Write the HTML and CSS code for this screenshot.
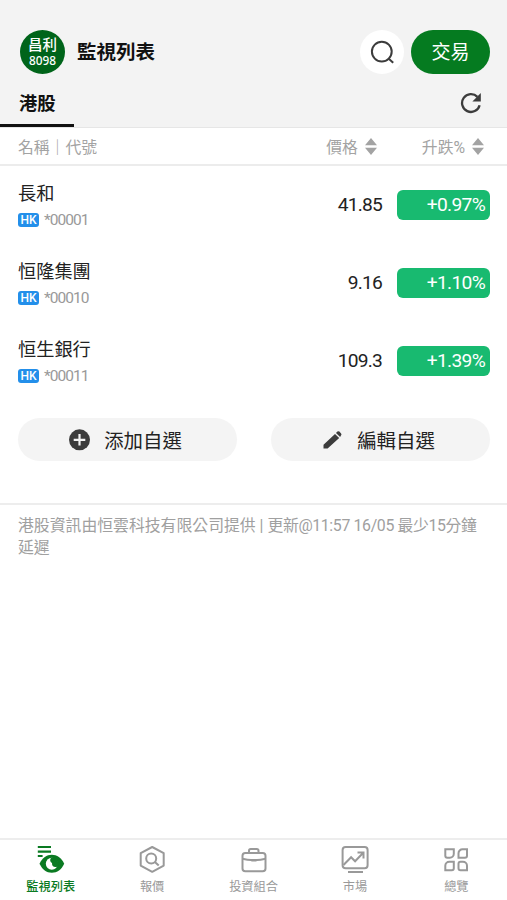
FILE: index.html
```html
<!DOCTYPE html>
<html lang="zh-Hant">
<head>
<meta charset="utf-8">
<meta name="viewport" content="width=device-width, initial-scale=1">
<title>監視列表</title>
<link rel="stylesheet" href="styles.css">
</head>
<body>
<div class="app">
  <header class="header">
    <div class="topbar">
      <div class="logo"><span class="logo-name">昌利</span><span class="logo-code">8098</span></div>
      <h1 class="title">監視列表</h1>
      <button class="search" aria-label="搜尋">
        <svg width="26" height="26" viewBox="0 0 26 26" fill="none" stroke="#3c3c3c" stroke-width="2"><circle cx="12.8" cy="12.6" r="9.9"/><path d="M19.2 19.2 24.2 23.8"/></svg>
      </button>
      <button class="trade">交易</button>
    </div>
    <div class="tabs">
      <div class="tab">港股</div>
      <svg class="refresh" width="22" height="22" viewBox="0 0 22 22"><path d="M19.6 13.2A8.9 8.9 0 1 1 17.4 4.9" fill="none" stroke="#3c3c3c" stroke-width="2.3"/><path d="M20.8 1v8.6h-8.4z" fill="#3c3c3c"/></svg>
    </div>
  </header>

  <div class="columns">
    <span class="col-name">名稱｜代號</span>
    <span class="col-price">價格<svg class="sort" width="12" height="17" viewBox="0 0 12 17"><path d="M6 0l6 7.2H0zM6 17l6-7.2H0z"/></svg></span>
    <span class="col-change">升跌%<svg class="sort" width="12" height="17" viewBox="0 0 12 17"><path d="M6 0l6 7.2H0zM6 17l6-7.2H0z"/></svg></span>
  </div>

  <main>
    <div class="row">
      <div class="stock"><div class="name">長和</div><div class="code"><span class="tag">HK</span>*00001</div></div>
      <div class="price">41.85</div><div class="change">+0.97%</div>
    </div>
    <div class="row">
      <div class="stock"><div class="name">恒隆集團</div><div class="code"><span class="tag">HK</span>*00010</div></div>
      <div class="price">9.16</div><div class="change">+1.10%</div>
    </div>
    <div class="row">
      <div class="stock"><div class="name">恒生銀行</div><div class="code"><span class="tag">HK</span>*00011</div></div>
      <div class="price">109.3</div><div class="change">+1.39%</div>
    </div>
    <div class="actions">
      <button class="action"><svg width="22" height="22" viewBox="0 0 22 22"><circle cx="11.5" cy="10.8" r="10.5" fill="#3c3c3c"/><path d="M11.5 5v11.6M5.7 10.8h11.6" stroke="#f4f4f4" stroke-width="2.2"/></svg>添加自選</button>
      <button class="action"><svg width="22" height="22" viewBox="0 0 22 22" fill="#3c3c3c"><path d="M2.5 19.6v-3.8L14 4.900l4.200 4.200L6.600 19.600zM15 4l1.400-1.400q1-.8 2 0l1.700 1.800q.8 1 0 1.900L19.100 8z"/></svg>編輯自選</button>
    </div>
    <p class="notice">港股資訊由恒雲科技有限公司提供 | <span class="stamp">更新@11:57 16/05 最少15分鐘</span><br>延遲</p>
  </main>

  <nav class="nav">
    <a class="item active">
      <svg width="28" height="28" viewBox="0 0 28 28"><path d="M.8 2H14M.8 6.700H14M.8 11h4.800" stroke="#0a7a22" stroke-width="2.200"/><path d="M2.500 18.700C5.500 12.600 9.600 9.700 14.800 9.700S24.300 12.600 27.200 18.700c-2.700 6-7 9-12.400 9S5.500 24.700 2.500 18.700z" fill="#0a7a22"/><circle cx="14.800" cy="18.700" r="6" fill="#fff"/><path d="M14.500 12.500a3.300 3.300 0 0 0 .5 5.600q-.2 4.300 4.200 3.900l1.800-.6q1.200-6.600-3-8.700z" fill="#0a7a22"/></svg>
      <span>監視列表</span>
    </a>
    <a class="item">
      <svg width="28" height="28" viewBox="0 0 28 28" fill="none" stroke="#999" stroke-width="2" stroke-linejoin="round"><path d="M14.200 2 25.700 8.200v12.400L14.200 26.800 2.700 20.600V8.200z"/><circle cx="13.200" cy="13.500" r="5"/><path d="m16.900 17 3.800 3.600"/></svg>
      <span>報價</span>
    </a>
    <a class="item">
      <svg width="28" height="28" viewBox="0 0 28 28" fill="none" stroke="#999" stroke-width="2"><rect x="2.500" y="8" width="23" height="18.200" rx="2.800"/><path d="M9 8V5.700Q9 4.100 10.700 4.100h6.100q1.700 0 1.700 1.600V8M2.500 13.700q5.500 1.200 8.500 1.200h6q3 0 8.500-1.200M11.300 15.600h5.200"/></svg>
      <span>投資組合</span>
    </a>
    <a class="item">
      <svg width="28" height="28" viewBox="0 0 28 28" fill="none" stroke="#999" stroke-width="2"><rect x="1.600" y="2" width="25" height="21.300" rx="3"/><path d="m2.500 20 7.600-7.800 4 4L22 8M16.500 7.500h6v6M7 26.900h15"/></svg>
      <span>市場</span>
    </a>
    <a class="item">
      <svg width="28" height="28" viewBox="0 0 28 28" fill="none" stroke="#999" stroke-width="2"><path d="M3.300 4.300h8.500v4.500a4 4 0 0 1-4 4H5.300a2 2 0 0 1-2-2zM25 4.300h-4.500a4 4 0 0 0-4 4v4.500H23a2 2 0 0 0 2-2zM7.300 16.800h4.500v6.500a2 2 0 0 1-2 2H3.300v-4.500a4 4 0 0 1 4-4zM18.500 16.800H21a4 4 0 0 1 4 4v4.500h-6.500a2 2 0 0 1-2-2v-4.500a2 2 0 0 1 2-2z"/></svg>
      <span>總覽</span>
    </a>
  </nav>
</div>
</body>
</html>
```
FILE: styles.css
```css
* { box-sizing: border-box; }
body { margin: 0; background: #fff; color: #222; font-family: Roboto, "Noto Sans CJK TC", sans-serif; }
button { border: 0; padding: 0; font: inherit; color: inherit; }
svg { display: block; flex: none; }
.app { display: flex; flex-direction: column; width: 507px; height: 900px; overflow: hidden; }
.header { height: 128px; padding-top: 30px; background: #f3f3f3; border-bottom: 1px solid #e6e6e6; }
.topbar { display: flex; align-items: center; height: 44px; padding: 0 17px 0 20px; }
.logo { display: flex; flex-direction: column; align-items: center; width: 45px; height: 44px; padding-top: 8px; border-radius: 50%; background: #00641a; color: #fff; }
.logo-name { font-size: 14.5px; line-height: 16px; font-weight: 500; }
.logo-code { font-family: "Noto Sans", sans-serif; font-size: 11.8px; line-height: 13px; font-weight: 500; }
.title { flex: 1; margin: 2px 0 0 12px; font-size: 19.5px; line-height: 28px; font-weight: 700; color: #111; }
.search { display: grid; place-items: center; width: 44px; height: 44px; margin-right: 7px; border-radius: 50%; background: #fff; }
.trade { width: 79px; height: 44px; border-radius: 22px; background: #057b20; color: #fff; font-size: 19px; line-height: 43px; }
.tabs { display: flex; justify-content: space-between; height: 53px; padding-right: 25px; }
.tab { width: 74px; padding-left: 19px; border-bottom: 3px solid #111; font-size: 18.3px; line-height: 60px; font-weight: 700; color: #111; }
.refresh { margin-top: 18px; }
.columns { display: flex; align-items: center; height: 38px; padding: 0 23px 0 18px; border-bottom: 2px solid #ececec; color: #a3a3a3; font-size: 15.8px; }
.col-name { flex: 1; }
.col-price, .col-change { display: flex; align-items: center; }
.col-price { margin-right: 45px; }
.sort { margin-left: 7px; fill: #a3a3a3; }
.row { display: flex; align-items: center; height: 78px; padding: 0 17px 0 18px; }
.stock { flex: 1; padding-top: 2px; }
.name { font-size: 18.2px; line-height: 28px; }
.code { display: flex; align-items: center; height: 25px; color: #999; font-size: 15.5px; letter-spacing: -.95px; }
.tag { width: 21px; height: 14px; margin-right: 5px; border-radius: 3px; background: #238fea; color: #fff; font-size: 12px; line-height: 14px; font-weight: 500; letter-spacing: 0; text-align: center; }
.price { margin-right: 15px; font-size: 19.2px; line-height: 24px; padding-bottom: 1px; letter-spacing: -.8px; }
.change { width: 93px; height: 30px; padding-right: 5px; border-radius: 6px; background: #18ba70; color: #fff; font-size: 19.2px; line-height: 30px; letter-spacing: -.7px; text-align: right; }
.actions { display: flex; justify-content: space-between; padding: 18px 17px 42px 18px; border-bottom: 2px solid #ededed; }
.action { display: flex; align-items: center; justify-content: center; gap: 14px; width: 219px; height: 43px; padding-right: 5px; border-radius: 22px; background: #f4f4f4; font-size: 19.4px; }
.notice { margin: 10px 18px 0; color: #a0a0a0; font-size: 15.85px; line-height: 22px; white-space: nowrap; }
.stamp { letter-spacing: -.35px; }
.nav { display: flex; height: 62px; margin-top: auto; border-top: 2px solid #ededed; }
.item { display: flex; flex: 1; flex-direction: column; align-items: center; padding-top: 5px; color: #999; font-size: 12.2px; line-height: 16px; }
.item span { margin-top: 6px; }
.active { color: #0a7a22; font-weight: 500; }
```
